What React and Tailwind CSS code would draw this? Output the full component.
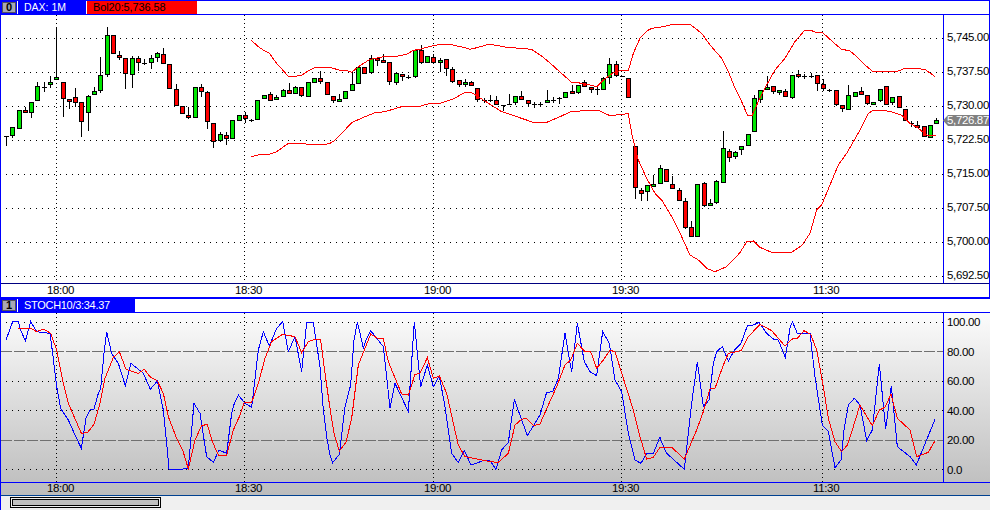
import React from 'react';

const GREEN = '#00e600';
const RED = '#ff0000';

// candles as [bodyTop, bodyBottom, wickTop, wickBottom, type], read at 3x scale
const candles = [
  [409, 412, 409, 437, 'd'], [382, 407, 382, 413, 'g'], [331, 386, 331, 386, 'g'], [331, 338, 320, 338, 'r'],
  [307, 338, 307, 353, 'g'], [259, 304, 247, 304, 'g'], [260, 262, 247, 275, 'd'], [247, 256, 229, 265, 'g'],
  [232, 241, 82, 241, 'g'], [247, 298, 247, 350, 'r'], [298, 304, 298, 326, 'r'], [292, 310, 265, 320, 'r'],
  [307, 365, 307, 410, 'r'], [289, 340, 286, 392, 'g'], [274, 286, 262, 286, 'g'], [226, 274, 172, 278, 'g'],
  [106, 226, 82, 232, 'g'], [106, 163, 106, 163, 'r'], [166, 175, 154, 179, 'r'], [175, 223, 175, 268, 'r'],
  [175, 226, 169, 265, 'g'], [175, 190, 169, 212, 'r'], [190, 192, 178, 196, 'd'], [175, 190, 166, 208, 'g'],
  [160, 175, 157, 187, 'g'], [163, 193, 145, 193, 'r'], [193, 268, 193, 268, 'r'], [268, 319, 253, 319, 'r'],
  [319, 343, 319, 343, 'r'], [346, 355, 322, 358, 'r'], [262, 355, 262, 355, 'g'], [262, 277, 253, 290, 'r'],
  [277, 367, 272, 388, 'r'], [370, 427, 370, 443, 'r'], [403, 424, 397, 427, 'g'], [406, 418, 397, 436, 'r'],
  [361, 418, 361, 418, 'g'], [346, 364, 346, 364, 'g'], [346, 358, 335, 370, 'r'], [361, 363, 358, 365, 'd'],
  [301, 361, 301, 361, 'g'], [286, 298, 286, 298, 'g'], [283, 304, 277, 304, 'r'], [292, 301, 286, 301, 'g'],
  [271, 292, 268, 292, 'g'], [271, 283, 250, 283, 'r'], [262, 283, 259, 283, 'g'], [262, 289, 262, 292, 'r'],
  [247, 292, 247, 292, 'g'], [235, 250, 235, 250, 'g'], [235, 247, 214, 253, 'r'], [247, 286, 247, 286, 'r'],
  [289, 304, 289, 310, 'r'], [298, 304, 283, 304, 'g'], [274, 298, 274, 298, 'g'], [253, 274, 217, 274, 'g'],
  [202, 253, 202, 253, 'g'], [202, 223, 202, 223, 'r'], [175, 220, 166, 223, 'g'], [175, 182, 172, 199, 'r'],
  [181, 187, 163, 187, 'r'], [187, 247, 187, 256, 'r'], [220, 250, 220, 256, 'g'], [223, 229, 223, 244, 'r'],
  [230, 232, 226, 238, 'd'], [151, 232, 151, 235, 'g'], [151, 190, 136, 193, 'r'], [169, 190, 169, 190, 'g'],
  [172, 190, 163, 190, 'r'], [181, 190, 175, 215, 'g'], [178, 208, 178, 229, 'r'], [208, 247, 202, 250, 'r'],
  [241, 256, 241, 262, 'r'], [247, 256, 238, 262, 'g'], [247, 259, 244, 259, 'r'], [265, 301, 265, 307, 'r'],
  [301, 302, 295, 310, 'd'], [301, 302, 286, 307, 'd'], [301, 316, 289, 316, 'r'], [314, 316, 314, 334, 'd'],
  [311, 313, 283, 313, 'd'], [289, 310, 289, 316, 'g'], [289, 301, 274, 301, 'r'], [301, 313, 301, 319, 'r'],
  [311, 313, 307, 325, 'd'], [311, 312, 307, 322, 'd'], [301, 310, 271, 310, 'g'], [301, 302, 292, 310, 'd'],
  [295, 297, 292, 313, 'd'], [277, 295, 277, 295, 'g'], [274, 281, 256, 281, 'r'], [256, 280, 256, 283, 'g'],
  [247, 262, 241, 262, 'r'], [262, 268, 262, 280, 'r'], [268, 269, 262, 286, 'd'], [235, 271, 232, 271, 'g'],
  [193, 235, 175, 253, 'g'], [193, 229, 184, 232, 'r'], [229, 231, 229, 232, 'd'], [235, 295, 235, 295, 'r'],
  [438, 565, 438, 596, 'r'], [571, 583, 565, 602, 'r'], [556, 577, 556, 602, 'g'], [553, 559, 526, 559, 'g'],
  [505, 553, 496, 553, 'g'], [508, 547, 508, 547, 'r'], [553, 568, 529, 568, 'r'], [571, 604, 565, 604, 'r'],
  [604, 685, 595, 688, 'r'], [682, 712, 664, 712, 'r'], [553, 712, 553, 712, 'g'], [550, 619, 547, 622, 'r'],
  [610, 619, 598, 619, 'g'], [544, 610, 541, 613, 'g'], [445, 550, 393, 550, 'g'], [454, 475, 448, 487, 'r'],
  [457, 472, 454, 478, 'g'], [439, 451, 439, 466, 'g'], [403, 439, 403, 439, 'g'], [295, 397, 286, 397, 'g'],
  [271, 301, 271, 310, 'g'], [262, 268, 229, 268, 'g'], [259, 277, 259, 283, 'r'], [271, 277, 271, 286, 'g'],
  [274, 292, 268, 292, 'r'], [226, 295, 226, 298, 'g'], [223, 232, 211, 235, 'r'], [229, 230, 223, 238, 'd'],
  [228, 229, 220, 235, 'd'], [226, 253, 226, 274, 'r'], [253, 268, 238, 274, 'r'], [271, 273, 268, 277, 'd'],
  [271, 315, 271, 319, 'r'], [316, 328, 316, 337, 'r'], [286, 331, 256, 331, 'g'], [277, 292, 277, 292, 'g'],
  [274, 286, 262, 286, 'r'], [286, 313, 286, 316, 'r'], [307, 313, 307, 313, 'g'], [268, 304, 268, 307, 'g'],
  [259, 316, 259, 316, 'r'], [292, 310, 292, 316, 'g'], [289, 325, 289, 325, 'r'], [328, 364, 328, 364, 'r'],
  [368, 370, 364, 382, 'd'], [374, 385, 364, 385, 'r'], [379, 412, 379, 412, 'r'], [376, 415, 376, 415, 'g'],
  [361, 373, 355, 373, 'g'],
];

// turn points read from a 3x crop at (ox, oy) into an svg points string
const trace = (ox, oy, pts) => pts.map(([x, y]) => `${ox + x / 3},${oy + y / 3}`).join(' ');

const bolUpper = [
  trace(0, 0, [[754,121],[775,140],[790,150],[808,160],[830,190],[865,229],[885,229],[905,226],[925,212],[945,202],[985,202]]),
  trace(330, 0, [[0,202],[30,211],[50,211],[65,217],[85,200],[120,178],[160,170],[195,170],[230,163],[250,151],[270,148],[300,139],[330,133],[360,133],[400,142],[420,148],[445,142],[475,133],[500,136],[530,142],[570,145],[605,148],[640,172],[670,198],[725,247],[760,250],[800,260],[820,240],[850,218],[875,211],[895,211],[910,160],[930,115],[950,93],[965,85],[990,82]]),
  trace(660, 0, [[0,82],[30,75],[90,73],[125,100],[150,135],[185,175],[205,215],[225,265],[245,305],[262,345],[277,345],[295,305],[320,255],[345,210],[375,175],[405,125],[432,93],[450,90],[470,98],[487,97],[510,118],[543,147],[570,153],[590,170],[615,195],[637,213],[715,213],[735,205],[760,205],[795,208],[825,230]]),
].join(' ');

const bolLower = [
  trace(0, 0, [[754,470],[775,465],[810,462],[830,455],[865,430],[915,430],[920,433],[975,433],[990,430]]),
  trace(330, 0, [[0,428],[10,425],[40,395],[65,368],[100,352],[135,338],[165,335],[215,320],[270,319],[300,310],[330,310],[370,297],[405,277],[425,278],[460,300],[515,335],[560,350],[610,367],[650,367],[690,350],[725,334],[805,331],[840,347],[895,341],[905,400],[915,440]]),
  trace(600, 130, [[100,30],[115,90],[140,145],[165,190],[185,210],[215,260],[245,320],[270,375],[295,390],[320,415],[345,425],[380,410],[420,368],[440,335],[460,333],[480,352],[515,367],[575,367],[605,347],[630,310],[650,240],[665,225],[690,165],[715,105],[740,70],[780,0]]),
  trace(660, 0, [[610,370],[625,340],[640,331],[670,331],[700,337],[725,346],[750,370],[775,385],[800,405],[828,407]]),
].join(' ');

const stochBlue = [
  trace(0, 270, [[18,210],[38,155],[55,155],[62,180],[76,213],[92,155],[110,185],[150,190],[158,250],[170,350],[182,415],[205,450],[225,495],[244,535],[258,445],[270,420],[282,417],[295,370],[302,355],[312,250],[320,186],[335,250],[355,280],[376,347],[393,280],[430,310],[451,358],[472,333],[490,420],[500,520],[507,597],[548,597],[565,595],[575,480],[582,400],[600,430],[620,560],[640,577],[657,540],[680,550],[695,430],[703,400],[715,375],[735,400],[755,412],[775,240],[790,185],[808,228],[830,175],[848,155],[865,245],[885,200],[905,305],[920,157],[940,157],[960,290],[970,420],[980,500],[990,555]]),
  trace(330, 290, [[0,495],[8,518],[28,493],[45,350],[62,285],[72,150],[82,97],[90,130],[100,175],[108,150],[122,122],[160,170],[170,260],[180,355],[195,280],[235,365],[253,95],[262,190],[272,290],[292,225],[310,290],[328,258],[345,350],[365,490],[385,518],[403,482],[423,525],[460,512],[480,512],[498,538],[515,480],[535,457],[553,328],[592,437],[630,375],[650,307],[668,305],[685,265],[705,130],[725,247],[742,100],[763,215],[780,245],[800,257],[818,125],[838,160],[855,270],[875,305],[895,430],[915,510],[933,520],[950,490],[970,490],[990,440]]),
  trace(660, 290, [[0,445],[20,490],[73,538],[95,340],[112,215],[130,350],[147,330],[160,220],[170,185],[187,170],[205,213],[225,178],[243,160],[263,105],[280,105],[297,97],[320,130],[340,147],[355,150],[376,203],[390,115],[397,95],[412,130],[450,130],[465,260],[487,405],[505,425],[525,533],[543,510],[552,420],[565,345],[583,325],[600,345],[620,452],[637,420],[658,222],[677,417],[694,288],[712,470],[750,500],[769,525],[825,388]]),
].join(' ');

const stochRed = [
  trace(0, 270, [[55,175],[92,175],[110,185],[130,177],[152,190],[170,240],[190,340],[205,400],[244,490],[262,488],[282,463],[300,400],[315,325],[340,262],[358,245],[378,298],[415,310],[433,298],[450,320],[472,333],[490,370],[505,440],[530,505],[548,540],[565,597],[585,510],[605,467],[622,463],[637,515],[655,555],[680,555],[700,480],[718,440],[733,397],[755,397],[775,340],[795,265],[815,215],[848,193],[885,200],[905,248],[925,215],[945,208],[962,210],[975,310],[990,415]]),
  trace(330, 290, [[0,355],[12,430],[28,483],[48,457],[65,385],[85,225],[103,180],[122,132],[145,146],[160,146],[175,215],[215,312],[235,315],[255,253],[270,250],[292,203],[310,265],[328,258],[350,310],[370,400],[385,465],[405,500],[445,508],[480,515],[505,517],[535,490],[555,405],[575,388],[590,385],[610,407],[630,402],[655,345],[680,290],[705,225],[722,210],[742,160],[765,185],[782,185],[800,235],[820,210],[840,181],[855,185],[880,265],[910,360],[930,440],[950,507],[970,502],[990,472]]),
  trace(660, 290, [[0,472],[35,472],[73,507],[110,420],[130,365],[150,297],[165,295],[190,225],[205,190],[243,182],[265,140],[300,103],[335,122],[375,168],[397,147],[412,145],[432,122],[452,133],[470,180],[490,290],[505,385],[525,455],[545,485],[562,465],[580,410],[600,345],[637,407],[658,360],[675,352],[693,312],[712,385],[750,420],[770,500],[805,487],[825,452]]),
].join(' ');

const timeX = [56.5, 244.5, 433.5, 621.5, 822.5];
const priceY = [38.5, 72.5, 106.5, 140.5, 174.5, 208.5, 242.5, 276.5];
const prices = ['5,745.00', '5,737.50', '5,730.00', '5,722.50', '5,715.00', '5,707.50', '5,700.00', '5,692.50'];
const stochDotted = [322.5, 381.5, 410.5, 469.5];
const stochDashed = [351.5, 440.5];
const stochLabels = ['100.00', '80.00', '60.00', '40.00', '20.00', '0.0'];
const times = ['18:00', '18:30', '19:00', '19:30', '11:30'];

const Candle = ({ c, i }) => {
  const [top, bottom, wickTop, wickBottom, type] = c;
  const x = Math.round(6 + 6.2857 * i);
  const y1 = Math.round(top / 3);
  const y2 = Math.round(bottom / 3);
  const wy = Math.round(wickTop / 3);
  const h = Math.max(3, y2 - y1);
  return (
    <g>
      <rect x={x} y={wy} width="1" height={Math.max(1, Math.round(wickBottom / 3) - wy)} fill="#000" />
      {type === 'd' ? (
        <rect x={x - 2} y={y1} width="5" height="1" fill="#000" />
      ) : (
        <>
          <rect x={x - 2} y={y1} width="5" height={h} fill="#000" />
          <rect x={x - 1} y={y1 + 1} width="3" height={h - 2} fill={type === 'g' ? GREEN : RED} />
        </>
      )}
    </g>
  );
};

const Grid = ({ rows, y1, y2 }) => (
  <g stroke="#000" strokeWidth="1" strokeDasharray="1 5">
    {rows.map((y) => <line key={y} x1="6" x2="943" y1={y} y2={y} />)}
    {timeX.map((x) => <line key={x} x1={x} x2={x} y1={y1} y2={y2} strokeDasharray="1 3" />)}
  </g>
);

const PaneIcon = ({ n }) => (
  <div className="ml-[2px] mt-[1px] flex h-[11px] w-[14px] items-center justify-center border border-[#505060] bg-[#a8a8b4] text-[11px] font-bold leading-none text-black">{n}</div>
);

const TimeAxis = () => (
  <div className="grid h-full grid-cols-[46px_188px_189px_188px_201px_1fr] items-center text-[11.5px] leading-none tracking-[-0.35px] text-black">
    <span />
    {times.map((t) => <span key={t}>{t}</span>)}
  </div>
);

export default function App() {
  return (
    <div className="flex h-[510px] w-[990px] flex-col overflow-hidden bg-[#f0f0f0] font-['Liberation_Sans',Arial,sans-serif]">
      {/* price pane */}
      <div className="border-x border-t border-[#0000ff] bg-white">
        <div className="flex h-[14px] border-b border-[#0000ff]">
          <div className="-ml-[1px] flex w-[86px] bg-[#0000ff]">
            <PaneIcon n="0" />
            <div className="ml-[1px] w-[1px] bg-white" />
            <span className="ml-[6px] text-[10.5px] leading-[13px] text-white">DAX: 1M</span>
          </div>
          <div className="ml-[1px] w-[110px] bg-[#ff0000] pl-[6px] text-[11px] leading-[13px] tracking-[-0.1px] text-black">Bol20:5,736.58</div>
        </div>
        <div className="flex h-[268px]">
          <svg className="block h-[268px] w-[943px] shrink-0 border-r border-[#0000ff]" viewBox="1 15 942 268" shapeRendering="crispEdges">
            <Grid rows={priceY} y1={15} y2={283} />
            {candles.map((c, i) => <Candle key={i} c={c} i={i} />)}
            <polyline points={bolUpper} fill="none" stroke={RED} strokeWidth="1" />
            <polyline points={bolLower} fill="none" stroke={RED} strokeWidth="1" />
          </svg>
          <div className="relative flex-1 pl-[3px] pt-[6px] text-[11.5px] leading-none tracking-[-0.35px] text-black">
            {prices.map((p) => <div key={p} className="flex h-[34px] items-center">{p}</div>)}
            <div className="absolute left-[-1px] top-[100px] flex h-[11px] w-[46px] items-center bg-[#808080] pl-[4px] text-white [clip-path:polygon(5px_0,100%_0,100%_100%,5px_100%,0_50%)]">5,726.87</div>
          </div>
        </div>
        <div className="h-[14px] border-t border-[#000080]">
          <TimeAxis />
        </div>
      </div>
      <div className="h-[2px] bg-[#0000ff]" />

      {/* stochastic pane */}
      <div className="border-l border-[#0000ff] bg-white">
        <div className="flex h-[13px]">
          <div className="-ml-[1px] flex w-[135px] bg-[#0000ff]">
            <PaneIcon n="1" />
            <div className="ml-[1px] w-[1px] bg-white" />
            <span className="ml-[6px] text-[11px] leading-[13px] tracking-[-0.3px] text-white">STOCH10/3:34.37</span>
          </div>
        </div>
      </div>
      <div className="border-l border-[#0000ff] bg-gradient-to-b from-[#fcfcfc] to-[#bcbcbc]">
        <div className="flex h-[171px] border-y border-[#0000ff]">
          <svg className="block h-[169px] w-[943px] shrink-0 border-r border-[#0000ff]" viewBox="1 313 942 169" shapeRendering="crispEdges">
            <Grid rows={stochDotted} y1={313} y2={482} />
            <g stroke="#707070" strokeWidth="1" strokeDasharray="11 2">
              {stochDashed.map((y) => <line key={y} x1="1" x2="943" y1={y} y2={y} />)}
            </g>
            <polyline points={stochBlue} fill="none" stroke="#0000ff" strokeWidth="1" />
            <polyline points={stochRed} fill="none" stroke={RED} strokeWidth="1" />
          </svg>
          <div className="flex flex-1 flex-col justify-between pb-[7px] pl-[3px] pt-[4px] text-[11.5px] leading-[10px] tracking-[-0.35px] text-black">
            {stochLabels.map((l) => <div key={l}>{l}</div>)}
          </div>
        </div>
        <div className="h-[12px]">
          <TimeAxis />
        </div>
      </div>

      {/* scroll bar */}
      <div className="flex-1 border-l border-t border-l-[#0000ff] border-t-[#004090] pl-[9px] pt-[1px]">
        <div className="h-[11px] w-[151px] border border-black p-[1px]">
          <div className="h-full border border-black bg-[#c0c0c0]" />
        </div>
      </div>
    </div>
  );
}
